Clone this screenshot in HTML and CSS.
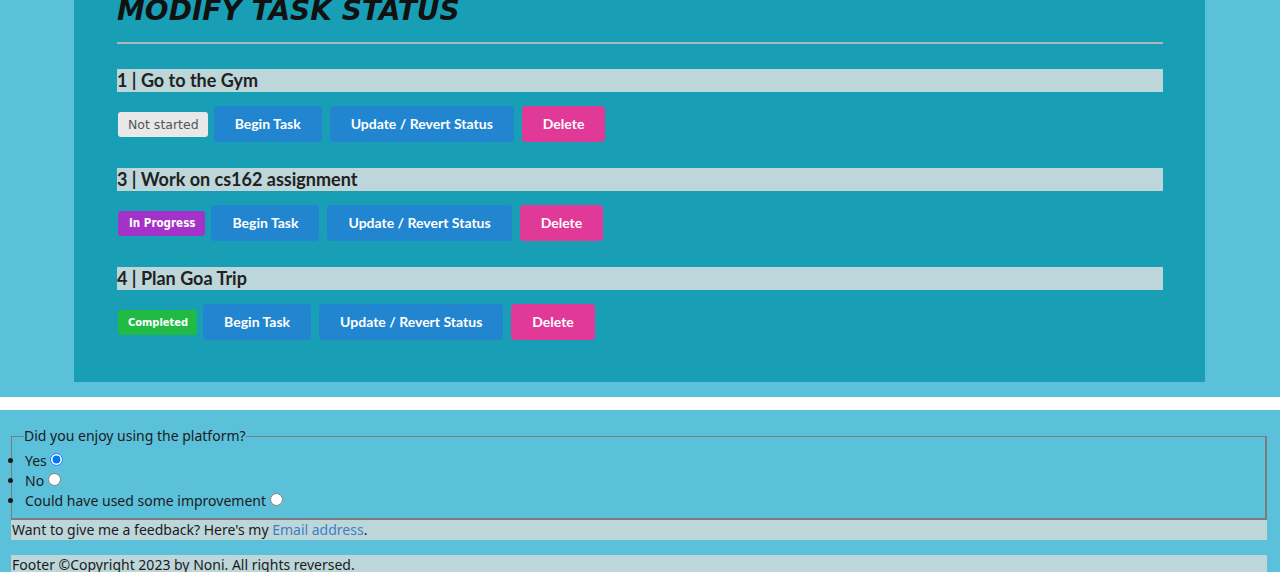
FILE: index.html
```html
<!DOCTYPE html>
<html>
<head>
<meta charset="utf-8">
<link rel="stylesheet" href="styles.css">
</head>
<body>
<main class="panel">
  <h1 class="title">MODIFY TASK STATUS</h1>
  <hr class="rule">
  <section class="task">
    <h3 class="task-name">1 | Go to the Gym</h3>
    <div class="actions">
      <span class="badge badge-grey">Not started</span>
      <button class="btn btn-blue">Begin Task</button>
      <button class="btn btn-blue">Update / Revert Status</button>
      <button class="btn btn-pink">Delete</button>
    </div>
  </section>
  <section class="task">
    <h3 class="task-name">3 | Work on cs162 assignment</h3>
    <div class="actions">
      <span class="badge badge-purple">In Progress</span>
      <button class="btn btn-blue">Begin Task</button>
      <button class="btn btn-blue">Update / Revert Status</button>
      <button class="btn btn-pink">Delete</button>
    </div>
  </section>
  <section class="task">
    <h3 class="task-name">4 | Plan Goa Trip</h3>
    <div class="actions">
      <span class="badge badge-green">Completed</span>
      <button class="btn btn-blue">Begin Task</button>
      <button class="btn btn-blue">Update / Revert Status</button>
      <button class="btn btn-pink">Delete</button>
    </div>
  </section>
</main>
<div class="band"></div>
<footer class="foot">
  <fieldset class="survey">
    <legend class="survey-legend">Did you enjoy using the platform?</legend>
    <ul class="options">
      <li>Yes <input type="radio" name="enjoy" checked></li>
      <li>No <input type="radio" name="enjoy"></li>
      <li>Could have used some improvement <input type="radio" name="enjoy"></li>
    </ul>
  </fieldset>
  <p class="note">Want to give me a feedback? Here's my <a class="mail" href="#">Email address</a>.</p>
  <p class="note copy">Footer ©Copyright 2023 by Noni. All rights reversed.</p>
</footer>
</body>
</html>
```

FILE: styles.css
```css
html, body {
  margin: 0;
  padding: 0;
}
body {
  background: #5bc0da;
  font-family: "Comic Sans MS", "Noto Sans", sans-serif;
  color: #1b1b1b;
  overflow: hidden;
  height: 572px;
}
.panel {
  margin: 0 75px 0 74px;
  background: #189fb5;
  padding: 0 42px 42px 43px;
}
.title {
  margin: -9px 0 0 0;
  font-family: "DejaVu Sans", sans-serif;
  font-style: italic;
  font-weight: bold;
  font-size: 28px;
  line-height: 40px;
  color: #111;
}
.rule {
  margin: 11px 0 25px 0;
  border: 0;
  border-top: 2px solid #a9b9bd;
  height: 0;
}
.task-name {
  margin: 0;
  background: #bcd6da;
  font-family: Lato, sans-serif;
  font-weight: bold;
  font-size: 18px;
  line-height: 23px;
  color: #222;
}
.actions {
  display: flex;
  align-items: center;
  margin: 14px 0 26px 0;
}
.task:last-child .actions {
  margin-bottom: 0;
}
.badge {
  font-family: "DejaVu Sans", sans-serif;
  font-size: 12.5px;
  line-height: 17px;
  padding: 4px 9px 4px 10px;
  border-radius: 3px;
  margin: 0 6px 0 1px;
}
.badge-grey {
  background: #e8e8e8;
  color: #555;
}
.badge-purple {
  background: #a333c8;
  color: #fff;
  font-weight: bold;
  font-family: "DejaVu Sans Condensed", "DejaVu Sans", sans-serif;
  font-size: 11.5px;
  padding-right: 10px;
  padding-left: 11px;
}
.badge-green {
  background: #21ba45;
  color: #fff;
  font-weight: bold;
  font-family: "DejaVu Sans Condensed", "DejaVu Sans", sans-serif;
  font-size: 11px;
}
.btn {
  border: 0;
  border-radius: 4px;
  font-family: Lato, sans-serif;
  font-weight: bold;
  font-size: 14px;
  line-height: 16px;
  padding: 10px 21px;
  color: #fff;
  margin-right: 8px;
}
.btn-blue {
  background: #2185d0;
}
.btn-pink {
  background: #e03997;
}
.band {
  height: 13px;
  background: #fff;
  margin-top: 15px;
}
.foot {
  padding: 17px 13px 0 11px;
  font-size: 14px;
}
.survey {
  margin: 0;
  padding: 0 0 7px 0;
  border-color: #7b7b7b;
  border-style: solid;
  border-width: 1px 2px 2px 1px;
}
.survey-legend {
  padding: 0;
  margin-left: 12px;
  line-height: 18px;
}
.options {
  margin: 0;
  padding: 6px 0 0 13px;
  line-height: 20px;
}
.options input {
  margin: 0;
  width: 13px;
  height: 13px;
  vertical-align: 0;
}
.note {
  margin: 0;
  background: #bcd6da;
  line-height: 20px;
  padding-left: 1px;
}
.copy {
  margin-top: 15px;
}
.mail {
  color: #3f7ec5;
  text-decoration: none;
}
```
